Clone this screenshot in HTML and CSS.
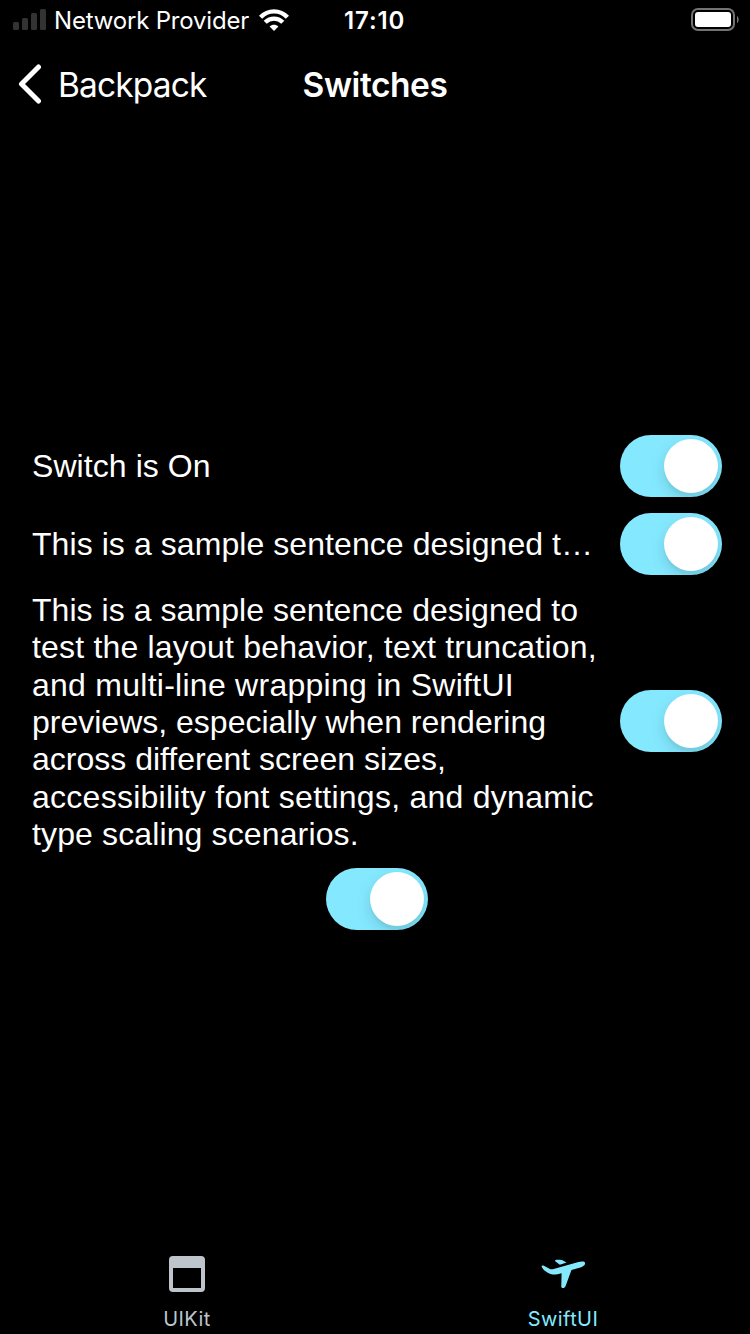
FILE: index.html
```html
<!DOCTYPE html>
<html lang="en">
<head>
<meta charset="utf-8">
<title>Switches</title>
<link rel="stylesheet" href="styles.css">
</head>
<body>
<div class="screen">
  <div class="status">
    <svg class="signal" width="34" height="22" viewBox="0 0 34 22" fill="#333"><rect x="0" y="13" width="6" height="8" rx="1.5"/><rect x="9" y="9" width="6" height="12" rx="1.5"/><rect x="18" y="4" width="6" height="17" rx="1.5"/><rect x="27" y="0" width="6" height="21" rx="1.5"/></svg>
    <span class="carrier">Network Provider</span>
    <svg class="wifi" width="30" height="22" viewBox="0 0 30 22"><g fill="none" stroke="#fff" stroke-width="4.400"><path d="M1.600 8.200C9 .4 21 .4 28.400 8.200"/><path d="M6.200 13.300c5-4.900 12.600-4.900 17.600 0"/></g><path d="M15 22l-4.400-4.500c2.500-2.300 6.300-2.300 8.800 0z" fill="#fff"/></svg>
    <span class="time">17:10</span>
    <svg class="battery" width="48" height="24" viewBox="0 0 48 24"><rect x="1" y="1" width="42" height="21" rx="6" fill="none" stroke="#737373" stroke-width="2"/><rect x="4" y="4" width="36" height="15" rx="3" fill="#fff"/><path d="M46 8c2.200 1.200 2.200 6 0 7.200z" fill="#737373"/></svg>
  </div>
  <header class="nav">
    <a class="back">
      <svg width="24" height="40" viewBox="0 0 24 40"><path d="M20.500 3L3.500 20l17 17" fill="none" stroke="#fff" stroke-width="5" stroke-linecap="round" stroke-linejoin="round"/></svg>
      <span class="back-label">Backpack</span>
    </a>
    <h1 class="title">Switches</h1>
  </header>
  <main class="content">
    <div class="row"><p class="label label-short">Switch is On</p><span class="switch"><i class="knob"></i></span></div>
    <div class="row"><p class="label label-short">This is a sample sentence designed t…</p><span class="switch"><i class="knob"></i></span></div>
    <div class="row row-long"><p class="label label-long"><span class="track-s">This is a sample sentence designed to</span><br><span class="track-l">test the layout behavior, text truncation,</span><br><span class="track-xl">and multi-line wrapping in SwiftUI</span><br>previews, especially when rendering<br>across different screen sizes,<br><span class="track-xl">accessibility font settings, and dynamic</span><br><span class="track-m">type scaling scenarios.</span></p><span class="switch"><i class="knob"></i></span></div>
    <div class="row row-single"><span class="switch"><i class="knob"></i></span></div>
  </main>
  <nav class="tabs">
    <a class="tab">
      <svg width="44" height="36" viewBox="0 0 44 36"><path fill="#bdc4cb" fill-rule="evenodd" d="M8 0h28a4 4 0 0 1 4 4v28a4 4 0 0 1-4 4H8a4 4 0 0 1-4-4V4a4 4 0 0 1 4-4zM8 12v20h28V12z"/></svg>
      <span class="tab-label">UIKit</span>
    </a>
    <a class="tab tab-active">
      <svg width="44" height="36" viewBox="0 0 44 36"><g fill="#84e9ff"><path d="M.6 10.500C.4 9.500 1.600 9.100 2.900 9.800L8.500 12.800c1.100.6 2 .7 3.200.4L37.500 6c3.800-1 6.200-.6 6.500.8.500 1.800-1.200 3.700-3.800 4.400l-9.700 2.700-5.800 15.900c-.6 1.700-1.500 2.300-3 2.300-1 0-1.500-.7-1.400-1.800l.3-13.100c-3.900 1-7.300 1.600-10.300 1C5.800 17.200 1.400 13 .6 10.500z"/><path d="M14.200 5.200c-.5-.7.200-1.500 1.300-1.500h3.500c1 0 1.700.2 2.500.6l4 2.200-6.600 2.300z"/></g></svg>
      <span class="tab-label">SwiftUI</span>
    </a>
  </nav>
</div>
</body>
</html>
```
FILE: styles.css
```css
* { box-sizing: border-box; }
body { margin: 0; background: #000; color: #fff; font-family: Inter, "Liberation Sans", sans-serif; }
.screen { width: 750px; height: 1334px; display: flex; flex-direction: column; background: #000; overflow: hidden; }
.status { height: 40px; display: flex; align-items: flex-start; padding: 9px 11px 0 13px; }
.signal { margin-right: 7px; }
.carrier { width: 206px; font-size: 24px; line-height: 24px; letter-spacing: -.19px; white-space: nowrap; }
.wifi { width: 30px; margin-left: -1px; }
.time { margin-left: 55px; font-size: 24px; line-height: 24px; font-weight: 600; letter-spacing: .9px; white-space: nowrap; }
.battery { margin-left: auto; margin-top: -1px; }
.nav { height: 88px; display: grid; grid-template-columns: 1fr auto 1fr; align-items: center; padding: 0 18px; }
.back { display: flex; align-items: center; gap: 16px; }
.back-label { padding-top: 1px; font-size: 33.5px; line-height: 40px; letter-spacing: -.85px; }
.title { margin: 0; padding-top: 1px; font-size: 33.5px; line-height: 40px; font-weight: 600; letter-spacing: -.45px; }
.content { flex: 1; display: flex; flex-direction: column; justify-content: center; gap: 16px; padding: 1px 28px 0 32px; }
.row { display: flex; align-items: center; justify-content: space-between; }
.row-long { padding-bottom: 1px; }
.row-single { justify-content: center; }
.label { margin: 0; font-family: "Liberation Sans", Arial, sans-serif; font-size: 32px; line-height: 37.35px; white-space: nowrap; }
.label-short { padding-top: 2px; letter-spacing: .07px; }
.label-long { height: 260px; padding-top: 1px; }
.track-s { letter-spacing: .05px; }
.track-m { letter-spacing: .13px; }
.track-l { letter-spacing: .19px; }
.track-xl { letter-spacing: .26px; }
.switch { flex: none; width: 102px; height: 62px; padding: 4px; border-radius: 31px; background: #84e9ff; display: flex; justify-content: flex-end; overflow: hidden; }
.knob { width: 54px; height: 54px; border-radius: 50%; background: #fff; box-shadow: 0 6px 16px rgba(0, 0, 0, .14), 0 4px 2px rgba(0, 0, 0, .03); }
.tabs { height: 98px; display: grid; grid-template-columns: 374px 376px; }
.tab { display: flex; flex-direction: column; align-items: center; padding-top: 20px; color: #bdc4cb; }
.tab-active { padding-left: 2px; color: #84e9ff; }
.tab-label { margin-top: 15px; font-size: 20px; line-height: 24px; letter-spacing: .4px; }
```
